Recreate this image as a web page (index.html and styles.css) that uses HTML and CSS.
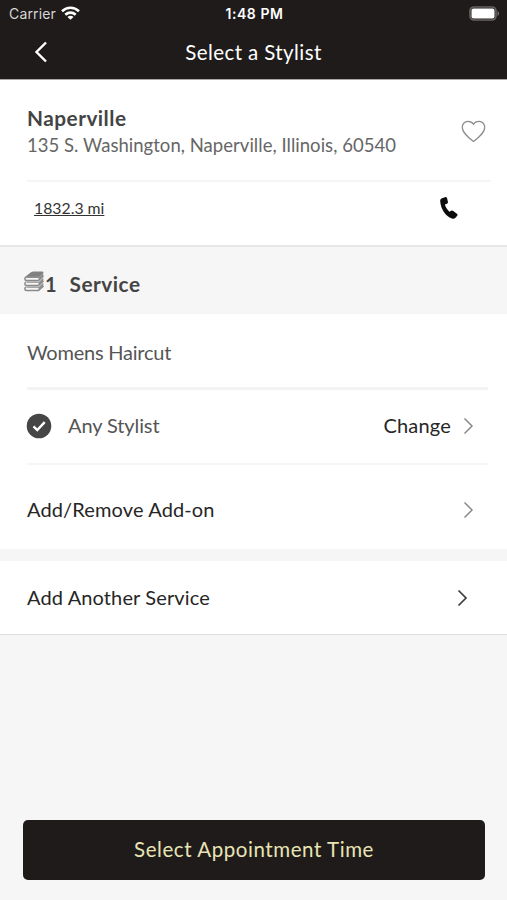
FILE: index.html
```html
<!DOCTYPE html>
<html lang="en">
<head>
<meta charset="utf-8">
<title>Select a Stylist</title>
<link rel="stylesheet" href="styles.css">
</head>
<body>
<div class="screen">
  <header class="top">
    <div class="status">
      <div class="status-left">
        <span class="carrier">Carrier</span>
        <svg class="wifi" width="19" height="14" viewBox="0 0 19 14" fill="none" stroke="#fff" stroke-width="2.6"><path d="M1 5.2C5.9 .6 13.1 .6 18 5.2"/><path d="M4.3 8.7c3-2.8 7.4-2.8 10.4 0"/><path d="M9.5 13.8 6.5 10.9c1.700-1.500 4.300-1.500 6 0z" fill="#fff" stroke="none"/></svg>
      </div>
      <span class="clock">1:48 PM</span>
      <svg class="battery" width="31" height="15" viewBox="0 0 31 15"><rect x="1" y="1" width="26" height="13" rx="4" fill="none" stroke="#66635f" stroke-width="1.700"/><rect x="2.500" y="2.500" width="23" height="10" rx="2" fill="#fff"/><path d="M28.500 5c2 .8 2 4.200 0 5z" fill="#77746f"/></svg>
    </div>
    <div class="nav">
      <svg class="back" width="14" height="22" viewBox="0 0 14 22" fill="none" stroke="#fff" stroke-width="2.400"><path d="M12 1.500 2.500 11l9.500 9.500"/></svg>
      <h1 class="title">Select a Stylist</h1>
    </div>
  </header>

  <section class="salon">
    <div class="salon-main">
      <div>
        <h2 class="salon-name">Naperville</h2>
        <p class="address">135 S. Washington, Naperville, Illinois, 60540</p>
      </div>
      <svg class="heart" width="25" height="23" viewBox="0 0 25 23" fill="none" stroke="#8c8c8c" stroke-width="1.200"><path d="M12.500 21.500C7 17.300 1.300 12.800 1.300 7.300c0-3.500 2.500-6 5.600-6 2.700 0 4.600 1.200 5.600 3 1-1.800 2.900-3 5.600-3 3.100 0 5.600 2.500 5.600 6 0 5.500-5.700 10-11.200 14.200z"/></svg>
    </div>
    <div class="salon-contact">
      <a class="distance">1832.3 mi</a>
      <svg class="phone" width="18" height="22" viewBox="0 0 18 22" fill="#0c0c0c"><path d="M2 1.200 5 .2c.9-.3 1.700.1 2 .9l.9 3.700c.2.900-.2 1.700-1 2l-2 .7c.6 2.600 2.300 5.200 4.500 7.200l1.800-.9c.7-.4 1.500-.3 2.100.3l3.600 2.700c.7.600.8 1.400.3 2l-1.700 2c-.8.900-2.200 1.200-3.500.8C5.600 19.500.7 11.800.2 4.200.1 2.700.7 1.700 2 1.200z"/></svg>
    </div>
  </section>

  <div class="section-head">
    <svg class="books" width="21" height="21" viewBox="0 0 21 21"><path d="M1.500 5.500 7 1.200Q8 .4 9.300.4h9q1.900.2.800 1.600L14.500 6.800H3z" fill="#808080"/><g fill="none" stroke="#8a8a8a" stroke-width="1.500"><path d="M14.500 6H2.500C.3 6 .3 9.500 2.500 9.500H14.500L19.500 5M2.500 11C.3 11 .3 14.500 2.500 14.500H14.500L19.500 10M2.500 16C.3 16 .3 19.500 2.500 19.500H14.500L19.500 15"/></g><path d="m14.500 6 4.800-4.500v3.800L14.500 10zM14.500 11.300l4.800-4.500v3.500L14.500 14.800zM14.500 16.300l4.800-4.500v3.500L14.500 19.800zM3 10.400h11.500v1.300H3zM3 15.400h11.500v1.300H3z" fill="#8f8f8f"/></svg>
    <span class="count">1</span>
    <span class="section-label">Service</span>
  </div>

  <main class="service">
    <div class="row service-name">Womens Haircut</div>
    <div class="row stylist">
      <svg class="check" width="26" height="26" viewBox="0 0 26 26"><circle cx="13" cy="13" r="12.300" fill="#464646"/><path d="m7.500 13.300 3.800 3.800 7.400-8" fill="none" stroke="#fff" stroke-width="2.400"/></svg>
      <span class="stylist-name">Any Stylist</span>
      <span class="change">Change</span>
      <svg class="chevron" width="11" height="18" viewBox="0 0 11 18"><path d="m1.500 1.500 7.500 7.500-7.500 7.500"/></svg>
    </div>
    <div class="row addon">
      <span class="addon-label">Add/Remove Add-on</span>
      <svg class="chevron" width="11" height="18" viewBox="0 0 11 18"><path d="m1.500 1.500 7.500 7.500-7.500 7.500"/></svg>
    </div>
  </main>

  <div class="another">
    <span class="another-label">Add Another Service</span>
    <svg class="chevron dark" width="11" height="18" viewBox="0 0 11 18"><path d="m1.500 1.500 7.500 7.500-7.500 7.500"/></svg>
  </div>

  <footer class="footer">
    <button class="cta">Select Appointment Time</button>
  </footer>
</div>
</body>
</html>
```
FILE: styles.css
```css
* { box-sizing: border-box; }
body, h1, h2, p { margin: 0; }
body { font-family: Lato, "Liberation Sans", sans-serif; font-size: 20px; background: #f6f6f6; color: #262626; }
.screen { display: flex; flex-direction: column; height: 900px; }
.top { height: 80px; background: #1e1b1a; border-bottom: 1px solid #aaa8a7; color: #fff; }
.status { display: grid; grid-template-columns: 1fr auto 1fr; align-items: center; height: 27px; padding: 0 7px 0 9px; font-family: Inter, sans-serif; font-size: 14px; line-height: 17px; }
.status-left { display: flex; align-items: center; gap: 5px; }
.wifi { margin-bottom: 1px; }
.carrier { color: #d8d6d5; letter-spacing: .15px; }
.clock { font-weight: 600; font-size: 14px; letter-spacing: .55px; }
.battery { justify-self: end; margin-bottom: 1px; }
.nav { display: grid; grid-template-columns: 60px 1fr 60px; align-items: center; height: 50px; }
.back { margin-left: 34px; }
.title { font-size: 20.500px; font-weight: 400; text-align: center; line-height: 24px; letter-spacing: .4px; padding-bottom: 1px; }
.salon { height: 167px; background: #fff; border-bottom: 2px solid #e6e6e6; padding: 0 16px 0 27px; }
.salon-main { display: flex; justify-content: space-between; height: 102px; padding: 25px 5px 0 0; border-bottom: 2px solid #f5f5f5; }
.salon-name { font-size: 20.800px; font-weight: 700; line-height: 25px; color: #444; letter-spacing: .48px; }
.address { font-size: 18.500px; line-height: 30px; color: #666; letter-spacing: .03px; }
.heart { margin-top: 15px; }
.salon-contact { display: flex; justify-content: space-between; align-items: center; height: 52px; padding: 0 33px 0 7px; }
.distance { padding-bottom: 2px; font-size: 15.800px; text-decoration: underline; color: #333; }
.section-head { display: flex; align-items: center; height: 67px; padding: 2px 0 0 24px; font-weight: 700; color: #444; }
.count { margin-left: 0; padding-top: 4px; }
.section-label { margin-left: 13px; padding-top: 4px; font-size: 20.800px; letter-spacing: .5px; }
.service { background: #fff; padding: 0 19px 0 27px; height: 235px; }
.row { display: flex; align-items: center; }
.service-name { height: 76px; padding-top: 2px; border-bottom: 3px solid #f3f3f3; color: #555; letter-spacing: -.23px; }
.stylist { height: 75px; border-bottom: 2px solid #f5f5f5; padding: 0 14px 2px 0; }
.stylist-name { flex: 1; margin-left: 16px; padding-bottom: 1px; color: #555; letter-spacing: -.1px; }
.check { margin-left: -1px; }
.change { padding-bottom: 1px; letter-spacing: .2px; }
.stylist .chevron { margin-left: 12px; }
.addon { height: 84px; padding: 6px 14px 0 0; justify-content: space-between; }
.addon-label { padding-bottom: 2px; letter-spacing: .13px; }
.chevron { fill: none; stroke: #8a8a8a; stroke-width: 1.500; }
.chevron.dark { stroke: #3c3c3c; stroke-width: 1.700; }
.another { display: flex; align-items: center; justify-content: space-between; height: 74px; margin-top: 12px; padding: 0 39px 0 27px; background: #fff; border-bottom: 1px solid #dedede; }
.another-label { padding-bottom: 2px; letter-spacing: .12px; }
.footer { flex: 1; display: flex; flex-direction: column; justify-content: flex-end; padding: 0 22px 20px 23px; }
.cta { height: 60px; padding: 0 0 2px; border: 0; border-radius: 5px; background: #1e1b1a; color: #e9e4b5; font: 20.500px Lato, sans-serif; letter-spacing: .57px; }
```
